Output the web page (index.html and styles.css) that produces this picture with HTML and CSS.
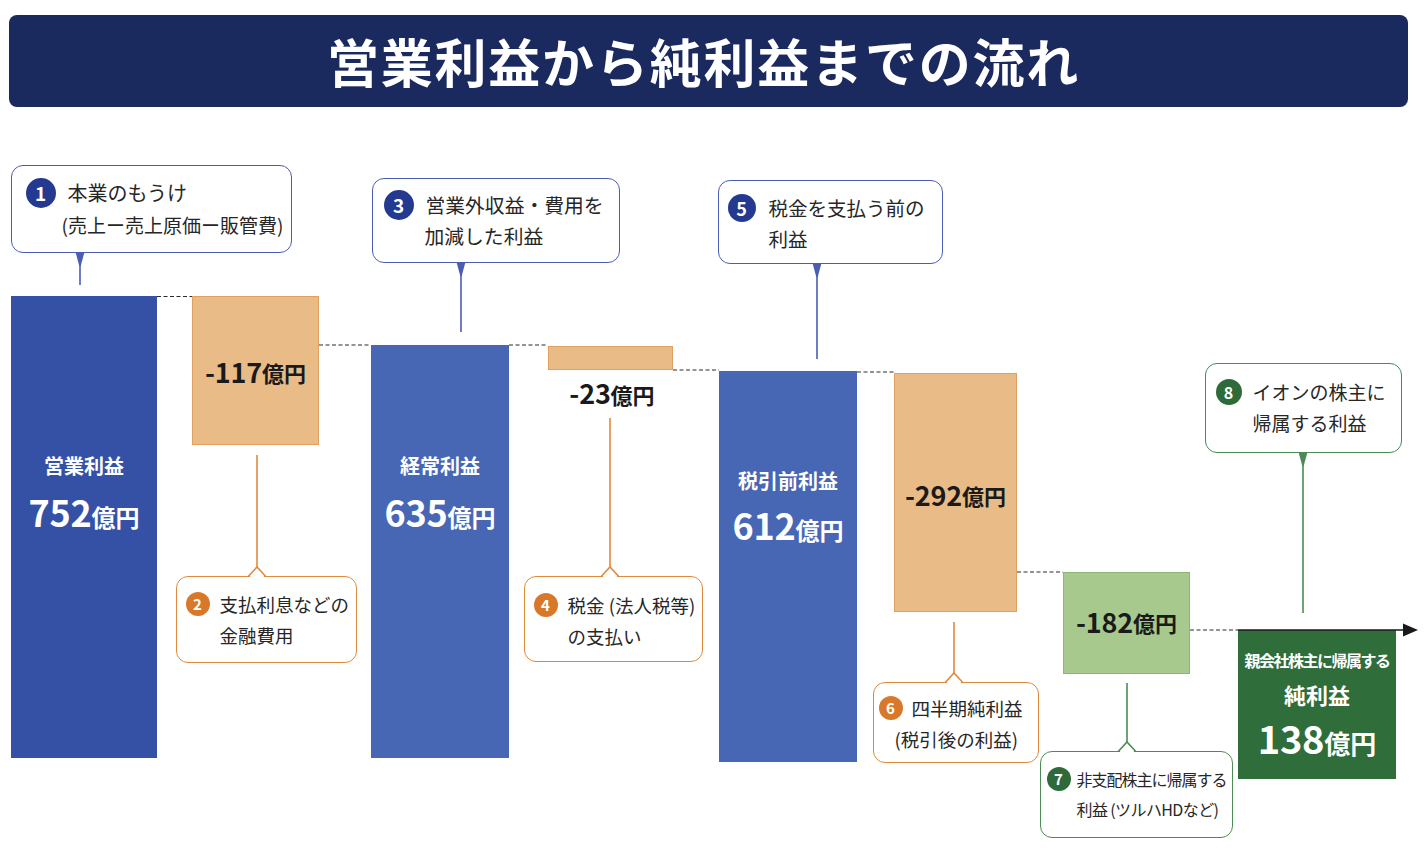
FILE: index.html
```html
<!DOCTYPE html>
<html lang="ja">
<head>
<meta charset="utf-8">
<title>営業利益から純利益までの流れ</title>
<link rel="stylesheet" href="styles.css">
</head>
<body>
<header class="title-bar"><h1>営業利益から純利益までの流れ</h1></header>
<main class="chart">
  <div class="bar bar-blue b1">
    <div class="bar-label">営業利益</div>
    <div class="bar-value"><span class="num">752</span><span class="unit">億円</span></div>
  </div>
  <div class="delta delta-orange o1"><span class="num">-117</span><span class="unit">億円</span></div>
  <div class="bar bar-blue2 b3">
    <div class="bar-label">経常利益</div>
    <div class="bar-value"><span class="num">635</span><span class="unit">億円</span></div>
  </div>
  <div class="delta delta-orange o2"></div>
  <div class="delta-text o2-text"><span class="num">-23</span><span class="unit">億円</span></div>
  <div class="bar bar-blue2 b5">
    <div class="bar-label">税引前利益</div>
    <div class="bar-value"><span class="num">612</span><span class="unit">億円</span></div>
  </div>
  <div class="delta delta-orange o3"><span class="num">-292</span><span class="unit">億円</span></div>
  <div class="delta delta-green g1"><span class="num">-182</span><span class="unit">億円</span></div>
  <div class="bar bar-green g2">
    <div class="bar-label small">親会社株主に帰属する</div>
    <div class="bar-label mid">純利益</div>
    <div class="bar-value"><span class="num">138</span><span class="unit">億円</span></div>
  </div>

  <div class="callout blue c1">
    <div class="line l1"><span class="badge">1</span>本業のもうけ</div>
    <div class="line l2">(売上ー売上原価ー販管費)</div>
  </div>
  <div class="callout blue c3">
    <div class="line"><span class="badge">3</span>営業外収益・費用を</div>
    <div class="line l2">加減した利益</div>
  </div>
  <div class="callout blue c5">
    <div class="line"><span class="badge">5</span>税金を支払う前の</div>
    <div class="line l2">利益</div>
  </div>
  <div class="callout green c8">
    <div class="line"><span class="badge">8</span>イオンの株主に</div>
    <div class="line l2">帰属する利益</div>
  </div>
  <div class="callout orange c2">
    <div class="line"><span class="badge">2</span>支払利息などの</div>
    <div class="line l2">金融費用</div>
  </div>
  <div class="callout orange c4">
    <div class="line"><span class="badge">4</span>税金 (法人税等)</div>
    <div class="line l2">の支払い</div>
  </div>
  <div class="callout orange c6">
    <div class="line"><span class="badge">6</span>四半期純利益</div>
    <div class="line l2">(税引後の利益)</div>
  </div>
  <div class="callout green c7">
    <div class="line"><span class="badge">7</span>非支配株主に帰属する</div>
    <div class="line l2">利益&nbsp;(ツルハHDなど)</div>
  </div>

  <svg class="overlay" width="1426" height="740" viewBox="0 0 1426 740">
    <g stroke="#2b2b2b" stroke-width="1.2" stroke-dasharray="4 2.5">
      <line x1="157" y1="178.5" x2="192" y2="178.5"/>
      <line x1="319" y1="227" x2="371" y2="227"/>
      <line x1="509" y1="227" x2="548" y2="227"/>
      <line x1="673" y1="252" x2="719" y2="252"/>
      <line x1="857" y1="254" x2="894" y2="254"/>
      <line x1="1017" y1="454" x2="1063" y2="454"/>
      <line x1="1190" y1="512" x2="1238" y2="512"/>
    </g>
    <line x1="1238" y1="512" x2="1405" y2="512" stroke="#1a1a1a" stroke-width="1.6"/>
    <polygon points="1403,505.5 1418,512 1403,518.5" fill="#1a1a1a"/>

    <!-- top pointers -->
    <g fill="#4a5db5" stroke="#4a5db5">
      <polygon points="75.5,134 84.5,134 80.7,148 79.3,148" stroke="none"/>
      <line x1="80" y1="147" x2="80" y2="167" stroke-width="1.6"/>
      <polygon points="456.5,144 465.5,144 461.7,158 460.3,158" stroke="none"/>
      <line x1="461" y1="157" x2="461" y2="214" stroke-width="1.6"/>
      <polygon points="812.5,145 821.5,145 817.7,159 816.3,159" stroke="none"/>
      <line x1="817" y1="158" x2="817" y2="241" stroke-width="1.6"/>
    </g>
    <g fill="#4e8a55" stroke="#4e8a55">
      <polygon points="1298.5,334 1307.5,334 1303.7,348 1302.3,348" stroke="none"/>
      <line x1="1303" y1="347" x2="1303" y2="495" stroke-width="1.6"/>
    </g>

    <!-- bottom pointers -->
    <g stroke="#e08a3c" stroke-width="1.6" fill="none">
      <line x1="257" y1="337" x2="257" y2="450"/>
      <polygon points="249,460 257,448.5 265,460" fill="#fff" stroke="none"/>
      <polyline points="248,458.8 257,449 266,458.8"/>
      <line x1="610" y1="300" x2="610" y2="450"/>
      <polygon points="602,460 610,448.5 618,460" fill="#fff" stroke="none"/>
      <polyline points="601,458.8 610,449 619,458.8"/>
      <line x1="954" y1="504" x2="954" y2="556"/>
      <polygon points="946,566 954,554.5 962,566" fill="#fff" stroke="none"/>
      <polyline points="945,564.8 954,555 963,564.8"/>
    </g>
    <g stroke="#4e8a55" stroke-width="1.6" fill="none">
      <line x1="1127" y1="565" x2="1127" y2="625"/>
      <polygon points="1119,635 1127,623.5 1135,635" fill="#fff" stroke="none"/>
      <polyline points="1118,633.8 1127,624 1136,633.8"/>
    </g>
  </svg>
</main>
</body>
</html>
```

FILE: styles.css
```css
body {
  margin: 0;
  background: #ffffff;
  font-family: "Noto Sans CJK JP", "Noto Sans", sans-serif;
  color: #222222;
  overflow: hidden;
}

.title-bar {
  margin: 15px 18px 0 9px;
  height: 92px;
  background: #1b2a5e;
  border-radius: 8px;
  display: flex;
  align-items: center;
  justify-content: center;
  padding-right: 10px;
}

.title-bar h1 {
  margin: 0;
  color: #ffffff;
  font-size: 52px;
  font-weight: 700;
  letter-spacing: 1.8px;
  line-height: 1;
}

.chart {
  position: relative;
  height: 740px;
  margin-top: 11px;
}

/* ---------- bars ---------- */
.bar {
  position: absolute;
  box-sizing: border-box;
  display: flex;
  flex-direction: column;
  align-items: center;
  color: #ffffff;
  font-weight: 700;
}

.bar-blue { background: #3551a6; }
.bar-blue2 { background: #4767b5; }
.bar-green { background: #2f6d3a; }

.bar-label {
  font-size: 20px;
  line-height: 28px;
  white-space: nowrap;
}

.bar-label.small {
  font-size: 16px;
  letter-spacing: -1.5px;
  line-height: 22px;
}

.bar-label.mid {
  font-size: 22px;
  line-height: 30px;
  margin-top: 8px;
}

.bar-value {
  line-height: 48px;
  white-space: nowrap;
}

.bar-value .num {
  font-size: 36px;
  letter-spacing: -0.3px;
}

.bar-value .unit {
  font-size: 24px;
}

.b1 { left: 11px; top: 178px; width: 146px; height: 462px; padding-top: 156px; }
.b1 .bar-value { margin-top: 7px; }
.b3 { left: 371px; top: 227px; width: 138px; height: 413px; padding-top: 107px; }
.b3 .bar-value { margin-top: 7px; }
.b5 { left: 719px; top: 253px; width: 138px; height: 391px; padding-top: 96px; }
.b5 .bar-value { margin-top: 5px; }
.g2 { left: 1238px; top: 512px; width: 158px; height: 149px; padding-top: 19px; }
.g2 .bar-value { margin-top: 4px; line-height: 50px; }
.g2 .bar-value .num { font-size: 38px; }
.g2 .bar-value .unit { font-size: 26px; }

/* ---------- deltas ---------- */
.delta {
  position: absolute;
  box-sizing: border-box;
  display: flex;
  align-items: center;
  justify-content: center;
  font-weight: 700;
  color: #1a1a1a;
  white-space: nowrap;
}

.delta-orange {
  background: #e9bb87;
  border: 1.5px solid #dfa060;
}

.delta-green {
  background: #a7c98e;
  border: 1.5px solid #8db777;
}

.delta .num, .delta-text .num {
  font-size: 27px;
  letter-spacing: -0.2px;
}

.delta .unit, .delta-text .unit {
  font-size: 22px;
}

.delta-text {
  position: absolute;
  font-weight: 700;
  color: #1a1a1a;
  white-space: nowrap;
  text-align: center;
  line-height: 36px;
}

.o1 { left: 192px; top: 178px; width: 127px; height: 149px; padding-top: 2px; }
.o2 { left: 548px; top: 228px; width: 125px; height: 24px; }
.o2-text { left: 547px; top: 257px; width: 130px; }
.o3 { left: 894px; top: 255px; width: 123px; height: 239px; padding-top: 4px; }
.g1 { left: 1063px; top: 454px; width: 127px; height: 102px; padding-bottom: 3px; }

/* ---------- callouts ---------- */
.callout {
  position: absolute;
  box-sizing: border-box;
  background: #ffffff;
  border: 1.6px solid;
  border-radius: 12px;
  color: #262626;
  font-size: 18.5px;
}

.callout.blue { border-color: #4a5db5; }
.callout.orange { border-color: #e08a3c; }
.callout.green { border-color: #4e8a55; }

.line {
  display: flex;
  align-items: center;
  height: 31px;
  white-space: nowrap;
}

.badge {
  flex: none;
  display: flex;
  align-items: center;
  justify-content: center;
  width: 24px;
  height: 24px;
  border-radius: 50%;
  color: #ffffff;
  font-weight: 700;
  font-size: 15px;
  line-height: 1;
  margin-right: 10px;
}

.blue .badge { background: #243a90; width: 30px; height: 30px; font-size: 19px; margin-right: 12px; }
.orange .badge { background: #d8782b; }
.green .badge { background: #2f6b3a; }

.c1 { left: 11px; top: 47px; width: 281px; height: 88px; padding: 10.5px 0 0 13.5px; font-size: 19px; }
.c1 .line { height: 32px; }
.c1 .l1 { font-size: 20px; }
.c1 .l2 { margin-left: 36px; }

.c3 { left: 372px; top: 60px; width: 248px; height: 85px; padding: 10px 0 0 10.5px; font-size: 19.8px; }
.c3 .l2 { margin-left: 41px; }

.c5 { left: 718px; top: 62px; width: 225px; height: 84px; padding: 11px 0 0 8.5px; font-size: 19.5px; }
.c5 .badge { width: 28px; height: 28px; font-size: 18px; margin-right: 13px; }
.c5 .l2 { margin-left: 41px; }

.c8 { left: 1205px; top: 245px; width: 197px; height: 90px; padding: 12px 0 0 9.5px; font-size: 19px; }
.c8 .badge { width: 26px; height: 26px; font-size: 16px; margin-right: 11px; }
.c8 .l2 { margin-left: 37px; }

.c2 { left: 176px; top: 458px; width: 181px; height: 87px; padding: 11px 0 0 8.5px; }
.c2 .l2 { margin-left: 34px; }

.c4 { left: 524px; top: 458px; width: 179px; height: 86px; padding: 12px 0 0 8.5px; }
.c4 .l2 { margin-left: 34px; }

.c6 { left: 873px; top: 564px; width: 166px; height: 81px; padding: 9px 0 0 4.5px; }
.c6 .badge { margin-right: 9px; }
.c6 .l2 { margin-left: 16px; }

.c7 { left: 1040px; top: 633px; width: 193px; height: 87px; padding: 11.5px 0 0 5.5px; font-size: 16px; letter-spacing: -1px; }
.c7 .line { height: 30px; }
.c7 .badge { margin-right: 6px; letter-spacing: 0; }
.c7 .l2 { margin-left: 30px; letter-spacing: -0.6px; }

.overlay {
  position: absolute;
  left: 0;
  top: 0;
  pointer-events: none;
}
```
